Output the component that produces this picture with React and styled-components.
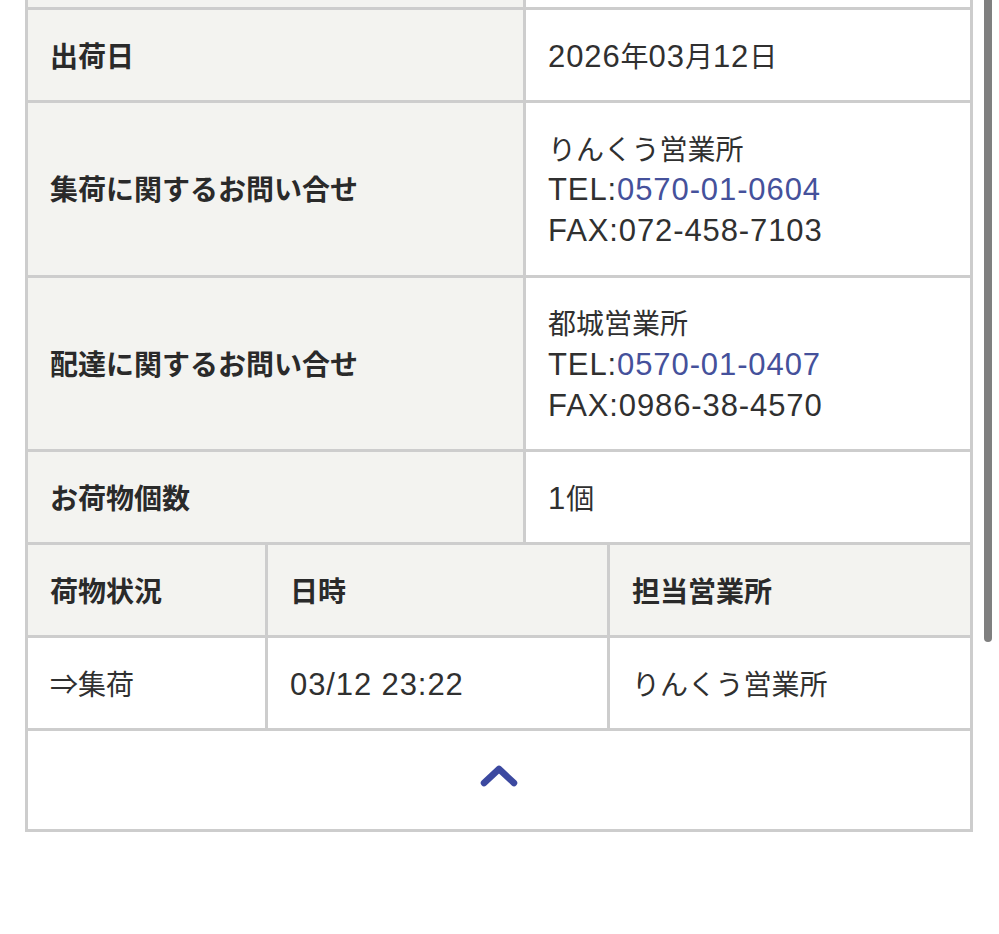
import React from 'react'
import styled, { createGlobalStyle } from 'styled-components'

const Global = createGlobalStyle`
	html, body {
		margin: 0;
		padding: 0;
		background: #fff;
	}
	body {
		font-family: "Liberation Sans", "Noto Sans CJK JP", sans-serif;
		color: #2e2e2e;
	}
`

const Page = styled.div`
	position: relative;
	width: 999px;
	height: 934px;
	overflow: hidden;
	background: #fff;
`

const Table = styled.div`
	margin-left: 25px;
	width: 942px;
	display: flex;
	flex-direction: column;
	gap: 3px;
	background: #cdcdcd;
	border: 3px solid #cdcdcd;
	border-top: none;
`

const Row = styled.div`
	display: grid;
	grid-template-columns: ${(p) => p.cols};
	gap: 3px;
`

const Cell = styled.div`
	background: ${(p) => (p.head ? '#f3f3f0' : '#fff')};
	padding: ${(p) => (p.stub ? '0' : '24.7px 22px')};
	height: ${(p) => (p.stub ? '7px' : 'auto')};
	display: flex;
	flex-direction: column;
	justify-content: center;
	font-size: 28px;
	line-height: 40.7px;
	font-weight: ${(p) => (p.head ? 700 : 400)};
	font-family: "Noto Sans CJK JP", sans-serif;
	color: ${(p) => (p.head ? '#2a2a2a' : '#303030')};
	white-space: nowrap;
`

const Line = styled.div`
	height: 40.7px;
`

// latin runs are set a little larger, like the system font in the shot
const Latin = styled.span`
	font-family: "Liberation Sans", sans-serif;
	font-size: 31px;
	line-height: 1;
	letter-spacing: 0.9px;
`

const Tel = styled.a`
	color: #45519b;
	text-decoration: none;
`

const Foot = styled.div`
	background: #fff;
	height: 98px;
	padding-bottom: 8px;
	box-sizing: border-box;
	display: flex;
	align-items: center;
	justify-content: center;
`

const Scrollbar = styled.div`
	position: absolute;
	left: 984px;
	top: -10px;
	width: 8px;
	height: 652px;
	border-radius: 4px;
	background: #7f7f7f;
`

const TOP = '495px 1fr'
const BOTTOM = '237px 339px 1fr'

const T = ({ children }) =>
	String(children)
		.split(/([\x20-\x7E]+)/)
		.filter(Boolean)
		.map((part, i) =>
			/^[\x20-\x7E]+$/.test(part) ? <Latin key={i}>{part}</Latin> : <span key={i}>{part}</span>
		)

const contacts = [
	{ label: '集荷に関するお問い合せ', office: 'りんくう営業所', tel: '0570-01-0604', fax: '072-458-7103' },
	{ label: '配達に関するお問い合せ', office: '都城営業所', tel: '0570-01-0407', fax: '0986-38-4570' },
]

const App = () => {
	return (
		<Page>
			<Global />
			<Table>
				<Row cols={TOP}>
					<Cell head stub />
					<Cell stub />
				</Row>
				<Row cols={TOP}>
					<Cell head>出荷日</Cell>
					<Cell>
						<Line><T>2026年03月12日</T></Line>
					</Cell>
				</Row>
				{contacts.map((c) => (
					<Row cols={TOP} key={c.label}>
						<Cell head>{c.label}</Cell>
						<Cell>
							<Line>{c.office}</Line>
							<Line>
								<Latin>TEL:</Latin>
								<Tel href="#">
									<Latin>{c.tel}</Latin>
								</Tel>
							</Line>
							<Line>
								<Latin>FAX:{c.fax}</Latin>
							</Line>
						</Cell>
					</Row>
				))}
				<Row cols={TOP}>
					<Cell head>お荷物個数</Cell>
					<Cell>
						<Line><T>1個</T></Line>
					</Cell>
				</Row>
				<Row cols={BOTTOM}>
					<Cell head>荷物状況</Cell>
					<Cell head>日時</Cell>
					<Cell head>担当営業所</Cell>
				</Row>
				<Row cols={BOTTOM}>
					<Cell>⇒集荷</Cell>
					<Cell>
						<Line><Latin>03/12 23:22</Latin></Line>
					</Cell>
					<Cell>りんくう営業所</Cell>
				</Row>
				<Foot>
					<svg width="38" height="24" viewBox="0 0 38 24">
						<polyline
							points="4,19 19,5 34,19"
							fill="none"
							stroke="#3c49a0"
							strokeWidth="6.5"
							strokeLinecap="round"
							strokeLinejoin="round"
						/>
					</svg>
				</Foot>
			</Table>
			<Scrollbar />
		</Page>
	)
}

export default App
